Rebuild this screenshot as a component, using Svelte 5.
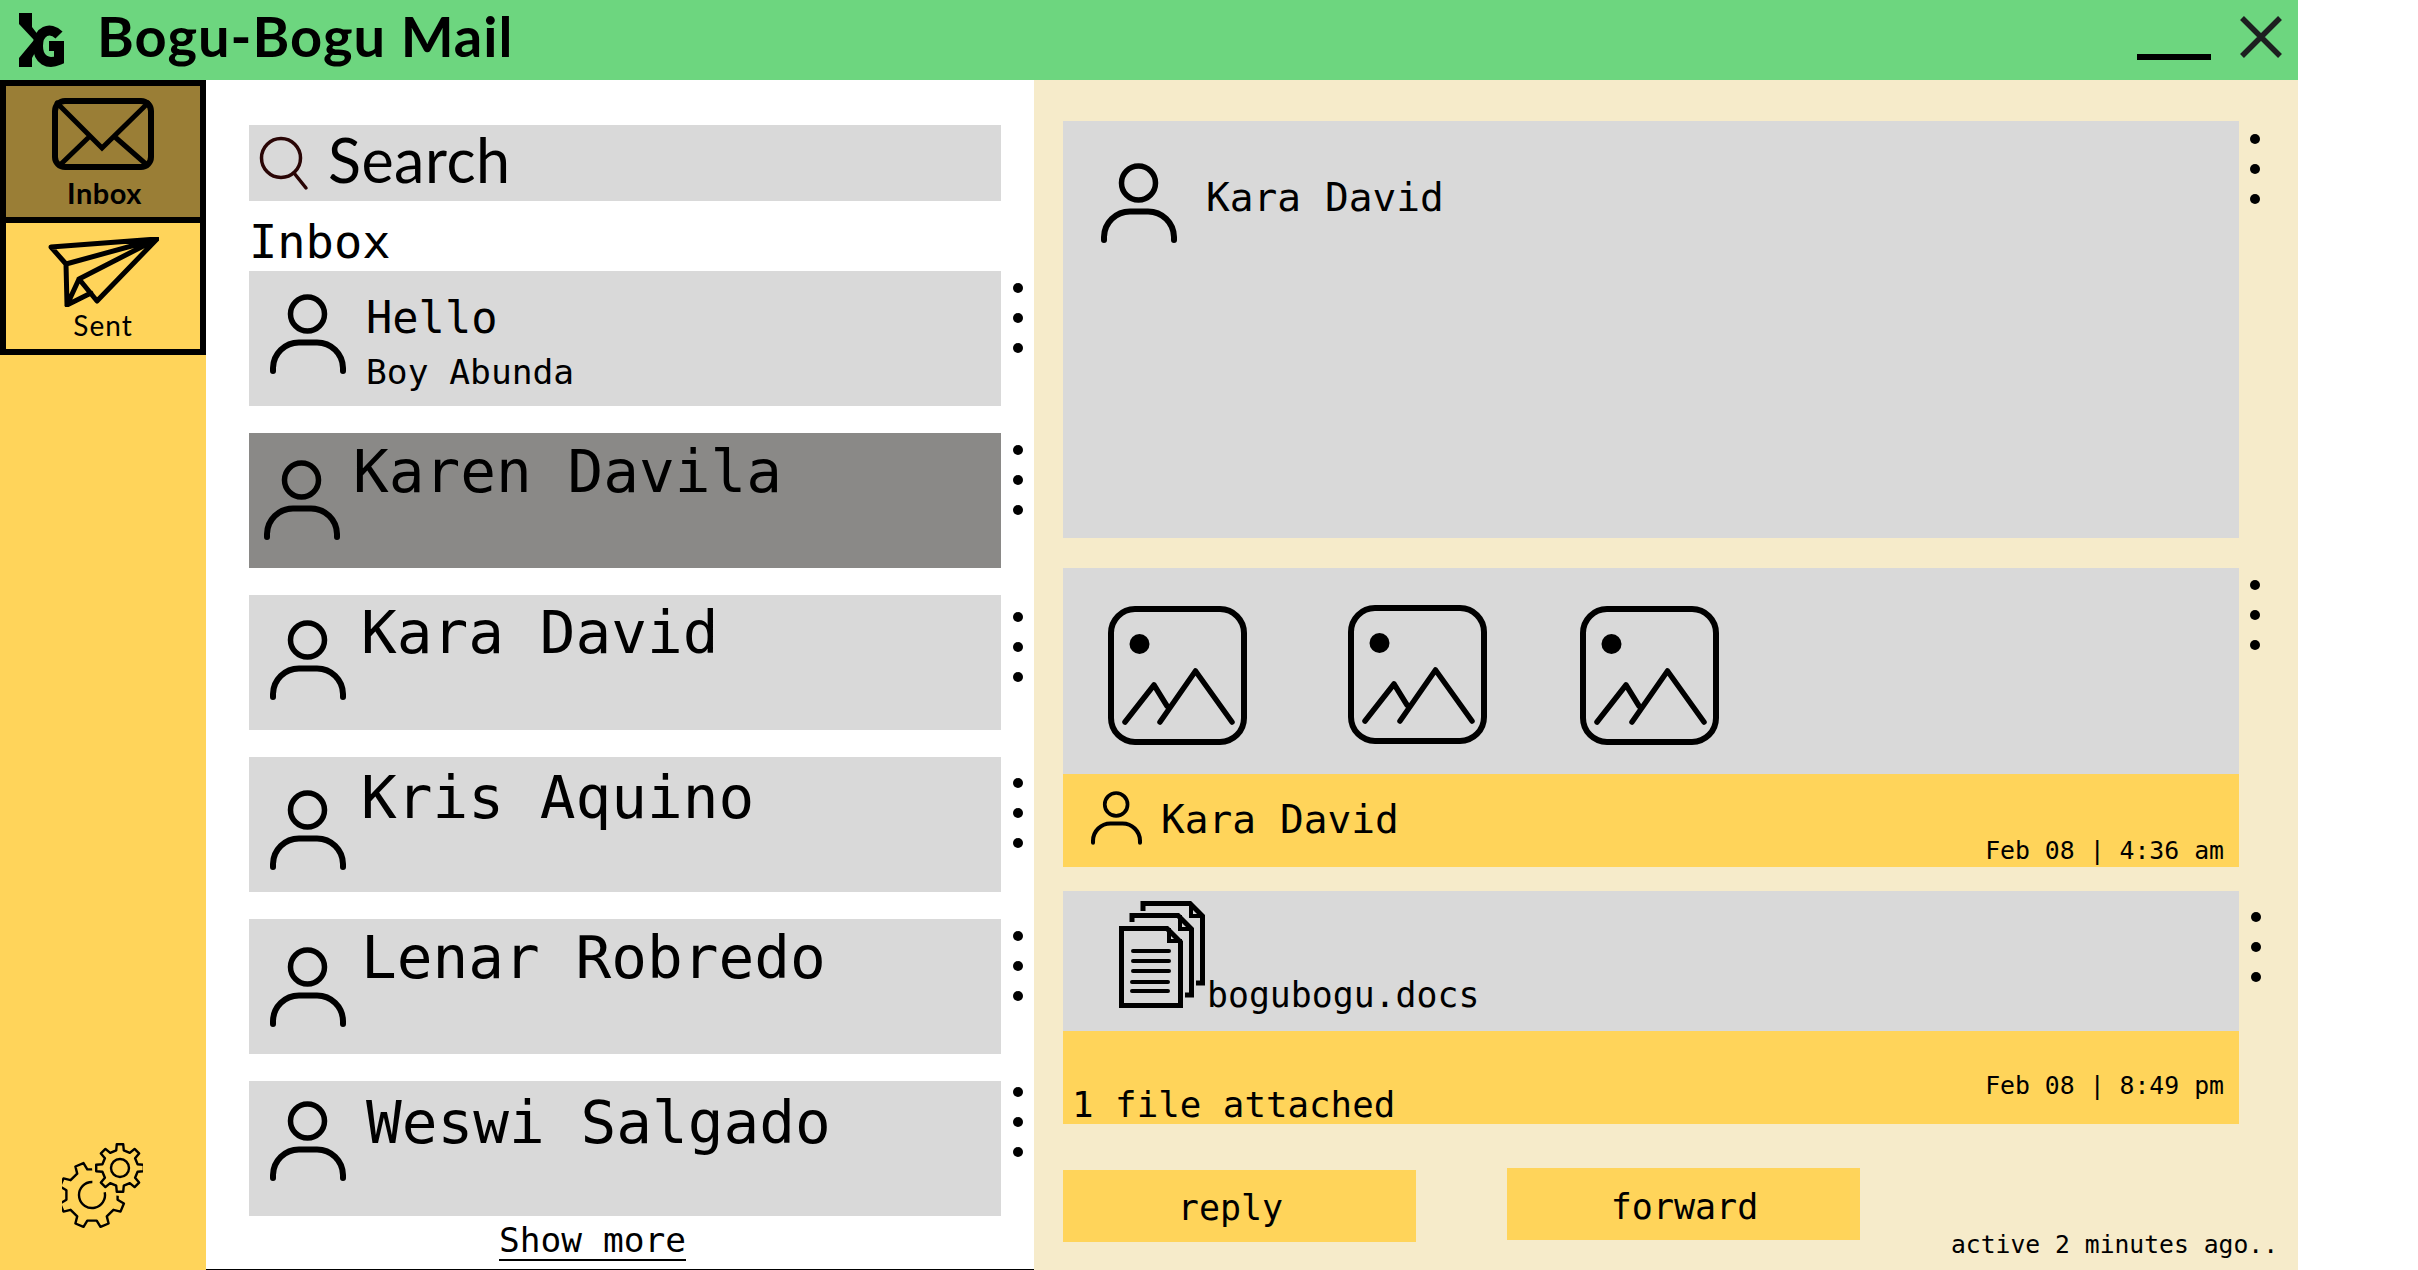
<script>
	const rows = [
		{ title: "Hello", sub: "Boy Abunda", il: 21, it: 23, tl: 20, tt: 16, dots: 12, small: true },
		{ title: "Karen Davila", il: 15, it: 27, tl: 13, tt: 4, dots: 12, selected: true },
		{ title: "Kara David", il: 21, it: 25, tl: 15, tt: 3, dots: 17 },
		{ title: "Kris Aquino", il: 21, it: 33, tl: 15, tt: 6, dots: 21 },
		{ title: "Lenar Robredo", il: 21, it: 28, tl: 15, tt: 4, dots: 12 },
		{ title: "Weswi Salgado", il: 21, it: 20, tl: 20, tt: 7, dots: 6 }
	];

	function gearPath(cx, cy, outer, root, teeth, offset = 0) {
		const pts = [];
		const step = (Math.PI * 2) / teeth;
		for (let i = 0; i < teeth; i++) {
			const a = (i + offset) * step - Math.PI / 2;
			const w = step * 0.17;
			const w2 = step * 0.27;
			pts.push([a - w2, root], [a - w, outer], [a + w, outer], [a + w2, root]);
		}
		return (
			pts
				.map(([a, r], i) => {
					const x = (cx + r * Math.cos(a)).toFixed(1);
					const y = (cy + r * Math.sin(a)).toFixed(1);
					return (i ? "L" : "M") + x + " " + y;
				})
				.join(" ") + " Z"
		);
	}
</script>

{#snippet person(cls)}
	<svg class="person {cls}" viewBox="0 0 76 82" fill="none" stroke="#000" stroke-linecap="round">
		<circle cx="37.5" cy="20" r="17" stroke-width="5.5" />
		<path d="M3 77V74A26 26 0 0 1 29 48.5H47A26 26 0 0 1 73 74V77" stroke-width="6" />
	</svg>
{/snippet}

{#snippet dots(top, cls = "")}
	<div class="dots {cls}" style="margin-top: {top}px">
		<span></span><span></span><span></span>
	</div>
{/snippet}

{#snippet picture(cls)}
	<svg class="picture {cls}" viewBox="0 0 139 139" fill="none" stroke="#000" stroke-linecap="round" stroke-linejoin="round">
		<rect x="3" y="3" width="133" height="133" rx="24" stroke-width="6" />
		<circle cx="31.5" cy="38" r="10" fill="#000" stroke="none" />
		<path d="M17 116L46 79L59 100M52 116L87.5 65L124 116" stroke-width="5.5" />
	</svg>
{/snippet}

<div class="app">
	<header class="titlebar">
		<svg class="logo" viewBox="0 0 70 80">
			<path d="M19 13H32V27L42 40L32 58V67H19V58L34 40L19 24Z" fill="#000" />
			<path d="M59 35C50 26 38 31 38 46C38 60 48 65 59 60V46H49" fill="none" stroke="#000" stroke-width="10" />
		</svg>
		<h1>Bogu-Bogu Mail</h1>
		<div class="window-btns">
			<span class="minimize"></span>
			<svg class="close" viewBox="0 0 42 42" stroke="#1d1f20" stroke-width="5.5">
				<path d="M2 2L40 40M40 2L2 40" />
			</svg>
		</div>
	</header>

	<div class="main">
		<nav class="sidebar">
			<div class="tabs">
				<div class="tab active">
					<svg class="mail" viewBox="0 0 103 72" fill="none" stroke="#000" stroke-width="5" stroke-linecap="round">
						<rect x="3" y="3" width="96" height="66" rx="10" stroke-width="6" />
						<path d="M5 5L50 50L96 5M37 39L8 67M63 39L95 67" />
					</svg>
					<span class="bold">Inbox</span>
				</div>
				<div class="tab">
					<svg class="plane" viewBox="0 0 112 70" fill="none" stroke="#000" stroke-width="5" stroke-linecap="round" stroke-linejoin="round">
						<path d="M110 2L4 10L19 27L110 2L32 42L50 64L110 2M19 27L20 68L44 56M20 68L32 42" />
					</svg>
					<span>Sent</span>
				</div>
			</div>
			<svg class="gears" viewBox="0 0 81 85" fill="none" stroke="#000" stroke-width="2.4">
				<path d={gearPath(30, 52, 33, 26, 8, 0.5)} stroke-linejoin="round" />
				<circle cx="58" cy="25" r="28" fill="#ffd45a" stroke="none" />
				<circle cx="30" cy="52" r="13" stroke-dasharray="64 18" transform="rotate(-12 30 52)" />
				<path d={gearPath(58, 25, 24, 18, 8)} stroke-linejoin="round" />
				<circle cx="58" cy="25" r="9" />
			</svg>
		</nav>

		<section class="list">
			<div class="search">
				<svg class="search-icon" viewBox="0 0 50 56" fill="none" stroke="#2a0606" stroke-width="3.5" stroke-linecap="round">
					<circle cx="22" cy="23" r="19.5" />
					<path d="M35 38L47 53" />
				</svg>
				<span>Search</span>
			</div>
			<div class="label">Inbox</div>
			<div class="rows">
				{#each rows as row}
					<div class="row">
						<div
							class="card"
							class:selected={row.selected}
							style="--il: {row.il}px; --it: {row.it}px; --tl: {row.tl}px; --tt: {row.tt}px"
						>
							{@render person("in-row")}
							{#if row.small}
								<div class="text small">
									<div class="title">{row.title}</div>
									<div class="sub">{row.sub}</div>
								</div>
							{:else}
								<div class="text">
									<div class="title">{row.title}</div>
								</div>
							{/if}
						</div>
						{@render dots(row.dots)}
					</div>
				{/each}
			</div>
			<div class="more"><span>Show more</span></div>
		</section>

		<section class="detail">
			<div class="block first">
				<div class="card-main">
					{@render person("in-main")}
					<span class="name">Kara David</span>
				</div>
				{@render dots(13, "tight")}
			</div>

			<div class="block second">
				<div class="attach">
					<div class="pictures">
						{@render picture("")}
						{@render picture("up")}
						{@render picture("")}
					</div>
					<div class="bar">
						{@render person("in-bar")}
						<span class="name">Kara David</span>
						<span class="date">Feb 08 | 4:36 am</span>
					</div>
				</div>
				{@render dots(12, "tight")}
			</div>

			<div class="block third">
				<div class="attach">
					<div class="file">
						<svg class="doc" viewBox="0 0 86 107" fill="none" stroke="#000" stroke-width="5">
							<path d="M2.5 27.5H48L61.5 41V104.5H2.5Z" />
							<path d="M50 27V40H63" stroke-width="4" />
							<path d="M13 21V14.5H59L72.5 28V94H66" />
							<path d="M61 14V28H73" stroke-width="4" />
							<path d="M24 10V2.5H71L83.5 15V82H77" />
							<path d="M72 3V15H84" stroke-width="4" />
							<path d="M14 50H50M14 60H50M14 70H50M13 81H49M13 90H49" stroke-width="4" stroke-linecap="round" />
						</svg>
						<span>bogubogu.docs</span>
					</div>
					<div class="bar file-bar">
						<span class="count">1 file attached</span>
						<span class="date">Feb 08 | 8:49 pm</span>
					</div>
				</div>
				{@render dots(21)}
			</div>

			<div class="actions">
				<button class="reply">reply</button>
				<button class="forward">forward</button>
				<span class="active-note">active 2 minutes ago..</span>
			</div>
		</section>
	</div>
</div>

<style>
	:global(body) {
		margin: 0;
		background: #fff;
	}

	.app {
		width: 2298px;
		height: 1270px;
		display: flex;
		flex-direction: column;
		font-family: "DejaVu Sans Mono", monospace;
		color: #000;
		overflow: hidden;
	}

	.titlebar {
		height: 80px;
		flex: none;
		display: flex;
		align-items: flex-start;
		background: #6dd67f;
	}

	.logo {
		width: 70px;
		height: 80px;
		flex: none;
	}

	h1 {
		margin: 0 0 0 27px;
		font: 700 56px/72px Lato, sans-serif;
		letter-spacing: 1px;
	}

	.window-btns {
		margin-left: auto;
		display: flex;
		align-items: flex-start;
		height: 80px;
		margin-right: 16px;
	}

	.minimize {
		width: 74px;
		height: 6px;
		margin-top: 54px;
		background: #000;
	}

	.close {
		width: 42px;
		height: 42px;
		margin: 16px 0 0 29px;
	}

	.main {
		flex: 1;
		min-height: 0;
		display: flex;
	}

	.sidebar {
		width: 206px;
		flex: none;
		display: flex;
		flex-direction: column;
		justify-content: space-between;
		background: #ffd45a;
	}

	.tabs {
		background: #000;
		padding: 6px;
		display: flex;
		flex-direction: column;
		gap: 6px;
	}

	.tab {
		height: 126px;
		background: #ffd45a;
		display: flex;
		flex-direction: column;
		align-items: center;
		font: 400 28px/28px Lato, sans-serif;
		letter-spacing: 1px;
	}

	.tab span {
		margin-top: -1px;
	}

	.tab.active {
		height: 131px;
		background: #9a7e36;
	}

	.bold {
		font-weight: 700;
		font-size: 29px;
		letter-spacing: 0.5px;
		margin-left: 3px;
	}

	.mail {
		width: 103px;
		height: 72px;
		margin: 12px 0 10px;
	}

	.plane {
		width: 112px;
		height: 70px;
		margin: 14px 0 5px;
	}

	.gears {
		width: 81px;
		height: 85px;
		margin: 0 0 42px 62px;
	}

	.list {
		width: 828px;
		flex: none;
		box-sizing: border-box;
		padding: 45px 0 0 43px;
		border-bottom: 1px solid #000;
		background: #fff;
	}

	.search {
		width: 752px;
		height: 76px;
		display: flex;
		align-items: center;
		background: #d9d9d9;
		font: 400 61px/76px Lato, sans-serif;
		letter-spacing: 0.5px;
	}

	.search span {
		margin-bottom: 6px;
	}

	.search-icon {
		width: 50px;
		height: 56px;
		margin: 0 19px 0 10px;
	}

	.label {
		height: 64px;
		padding-top: 6px;
		font-size: 47px;
		line-height: 70px;
	}

	.rows {
		display: flex;
		flex-direction: column;
		gap: 27px;
	}

	.row {
		display: flex;
		align-items: flex-start;
	}

	.card {
		width: 752px;
		height: 135px;
		display: flex;
		align-items: flex-start;
		background: #d9d9d9;
	}

	.card.selected {
		background: #8a8987;
	}

	.person {
		flex: none;
		display: block;
		width: 76px;
		height: 82px;
	}

	.person.in-row {
		margin: var(--it) 0 0 var(--il);
	}

	.text {
		margin: var(--tt) 0 0 var(--tl);
		font-size: 59.4px;
		line-height: 70px;
	}

	.text.small .title {
		font-size: 43.7px;
		line-height: 61px;
	}

	.text.small .sub {
		font-size: 34.6px;
		line-height: 48px;
	}

	.dots {
		margin-left: 12px;
		display: flex;
		flex-direction: column;
		gap: 20px;
		flex: none;
	}

	.dots.tight {
		margin-left: 11px;
	}

	.dots span {
		width: 10px;
		height: 10px;
		border-radius: 50%;
		background: #000;
	}

	.more {
		width: 437px;
		margin-top: 3px;
		text-align: right;
		font-size: 34.5px;
		line-height: 42px;
		white-space: pre;
	}

	.more span {
		display: inline-block;
		border-bottom: 2px solid #000;
		line-height: 38px;
	}

	.detail {
		flex: 1;
		background: #f6ebca;
		box-sizing: border-box;
		padding: 41px 0 0 29px;
	}

	.block {
		display: flex;
		align-items: flex-start;
	}

	.card-main {
		width: 1176px;
		height: 417px;
		background: #d9d9d9;
		display: flex;
		align-items: flex-start;
	}

	.person.in-main {
		margin: 42px 0 0 38px;
	}

	.name {
		font-size: 39.5px;
		line-height: 46px;
		white-space: pre;
	}

	.card-main .name {
		margin: 53px 0 0 29px;
	}

	.second {
		margin-top: 30px;
	}

	.third {
		margin-top: 24px;
	}

	.attach {
		width: 1176px;
	}

	.pictures {
		height: 206px;
		box-sizing: border-box;
		padding: 38px 0 0 45px;
		display: flex;
		align-items: flex-start;
		gap: 97px;
		background: #d9d9d9;
	}

	.picture {
		width: 139px;
		height: 139px;
		flex: none;
	}

	.picture.up {
		margin: -1px -4px 0 4px;
	}

	.bar {
		height: 93px;
		display: flex;
		align-items: flex-start;
		background: #ffd45a;
	}

	.person.in-bar {
		width: 51px;
		height: 55px;
		margin: 17px 0 0 28px;
	}

	.bar .name {
		margin: 22px 0 0 19px;
	}

	.date {
		margin: 62px 15px 0 auto;
		font-size: 24.8px;
		line-height: 30px;
		white-space: pre;
	}

	.file {
		height: 140px;
		display: flex;
		align-items: flex-start;
		background: #d9d9d9;
		font-size: 34.8px;
		white-space: pre;
	}

	.doc {
		width: 86px;
		height: 107px;
		flex: none;
		margin: 10px 0 0 56px;
	}

	.file span {
		margin: 82px 0 0 2px;
		line-height: 44px;
	}

	.file-bar .date {
		margin-top: 40px;
	}

	.count {
		font-size: 35.8px;
		line-height: 44px;
		margin: 52px 0 0 9px;
		white-space: pre;
	}

	.actions {
		margin-top: 46px;
		display: flex;
		align-items: flex-start;
	}

	button {
		width: 353px;
		height: 72px;
		border: 0;
		padding: 0;
		background: #ffd45a;
		font: inherit;
		font-size: 35px;
		color: #000;
	}

	.reply {
		padding: 3px 18px 0 0;
	}

	.forward {
		margin: -2px 0 0 91px;
		padding: 5px 0 0 2px;
	}

	.active-note {
		margin: 58px 0 0 91px;
		font-size: 24.7px;
		line-height: 34px;
		white-space: pre;
	}
</style>
